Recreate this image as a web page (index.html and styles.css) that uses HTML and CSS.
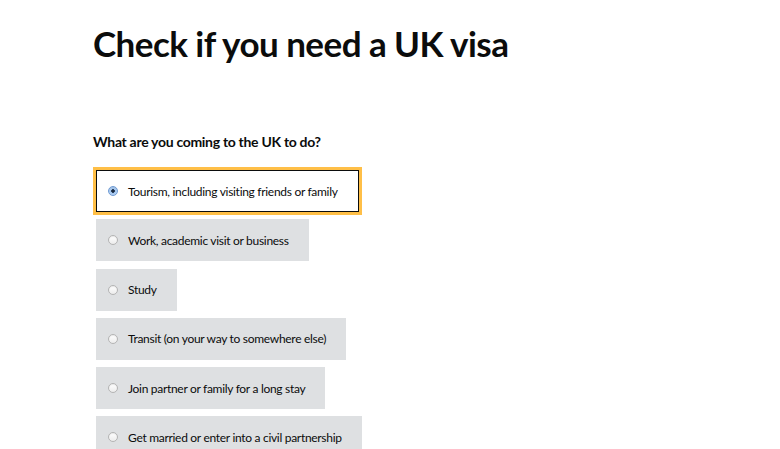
FILE: index.html
```html
<!DOCTYPE html>
<html lang="en">
<head>
    <meta charset="UTF-8">
    <title>Check if you need a UK visa</title>
    <link rel="stylesheet" href="styles.css">
</head>
<body>

    <div id="main_wrap">
        <h1 class="title">Check if you need a UK visa</h1>

        <!--질문 영역-->
        <form id="purposeForm">
            <fieldset>
                <legend class="question">What are you coming to the UK to do?</legend>

                <label class="block-label selected">
                    <span class="radio checked"></span>
                    <span class="label-text">Tourism, including visiting friends or family</span>
                </label>
                <label class="block-label">
                    <span class="radio"></span>
                    <span class="label-text">Work, academic visit or business</span>
                </label>
                <label class="block-label">
                    <span class="radio"></span>
                    <span class="label-text">Study</span>
                </label>
                <label class="block-label">
                    <span class="radio"></span>
                    <span class="label-text">Transit (on your way to somewhere else)</span>
                </label>
                <label class="block-label">
                    <span class="radio"></span>
                    <span class="label-text">Join partner or family for a long stay</span>
                </label>
                <label class="block-label">
                    <span class="radio"></span>
                    <span class="label-text">Get married or enter into a civil partnership</span>
                </label>
            </fieldset>
        </form>
        <!--질문 영역 끝-->
    </div>

</body>
</html>
```

FILE: styles.css
```css
* {
    margin: 0;
    padding: 0;
    box-sizing: border-box;
}

body {
    background-color: #ffffff;
    color: #0b0c0c;
    font-family: "Lato", "Liberation Sans", sans-serif;
}

#main_wrap {
    padding-left: 93px;
    padding-top: 22px;
}

.title {
    font-size: 35px;
    font-weight: 700;
    line-height: 42px;
    letter-spacing: -0.55px;
}

fieldset {
    border: 0;
    margin-top: 68px;
    display: flex;
    flex-direction: column;
    align-items: flex-start;
    gap: 7.25px;
}

.question {
    font-size: 14px;
    font-weight: 700;
    line-height: 20px;
    letter-spacing: -0.3px;
    margin-bottom: 18px;
}

.block-label {
    display: flex;
    align-items: center;
    gap: 10px;
    height: 42px;
    padding: 0 20px 0 12px;
    margin-left: 3px;
    background-color: #dee0e2;
    font-size: 12px;
    letter-spacing: -0.3px;
    cursor: pointer;
}

.block-label.selected {
    background-color: #ffffff;
    border: 1px solid #0b0c0c;
    outline: 3px solid #ffbf47;
    padding-left: 11px;
}

.radio {
    width: 10px;
    height: 10px;
    border-radius: 50%;
    border: 1px solid #b4b4b4;
    background: linear-gradient(#ffffff, #ececec);
    box-shadow: inset 0 1px 1px rgba(0, 0, 0, 0.08);
}

.radio.checked {
    border-color: #6d9ad4;
    background: radial-gradient(circle, #1a2a40 0, #1a2a40 1.5px, #9cc2ee 2px, #cfe1f7 100%);
}
```
